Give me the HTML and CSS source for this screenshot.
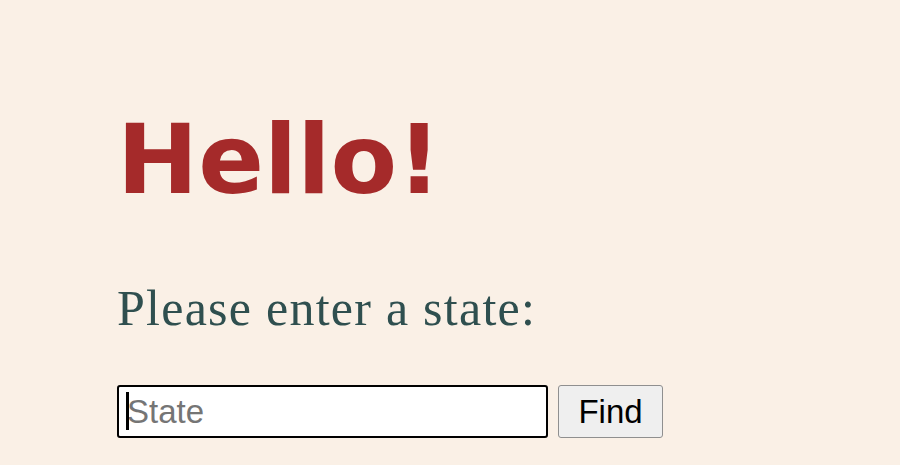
FILE: index.html
```html
<!DOCTYPE html>
<html lang="en">
<head>
<meta charset="utf-8">
<title>Hello</title>
<link rel="stylesheet" href="styles.css">
</head>
<body>
<main class="page">
  <h1 class="title">Hello!</h1>
  <p class="prompt">Please enter a state:</p>
  <form class="search" onsubmit="return false">
    <span class="input-wrap">
      <input class="state-input" type="text" placeholder="State" autofocus>
    </span>
    <button class="find-btn" type="submit">Find</button>
  </form>
</main>
</body>
</html>
```

FILE: styles.css
```css
html, body {
  margin: 0;
  padding: 0;
  background: #faf0e6;
}
.page {
  padding: 111px 0 0 117px;
}
.title {
  margin: 0;
  font-family: "DejaVu Sans", sans-serif;
  font-weight: bold;
  font-size: 97px;
  line-height: 1;
  color: #a52a2a;
}
.prompt {
  margin: 75px 0 0 0;
  font-family: "Liberation Serif", serif;
  font-size: 50px;
  letter-spacing: 1.25px;
  line-height: 1;
  color: #2f4f4f;
}
.search {
  display: flex;
  gap: 10px;
  margin-top: 52px;
}
.input-wrap {
  position: relative;
  display: block;
}
.input-wrap::after {
  content: "";
  position: absolute;
  left: 9px;
  top: 7px;
  width: 3px;
  height: 38px;
  background: #000;
}
.state-input {
  display: block;
  box-sizing: border-box;
  width: 431px;
  height: 53px;
  border: 2px solid #000;
  border-radius: 3px;
  padding: 0 8px;
  font-family: "Liberation Sans", Arial, sans-serif;
  font-size: 33px;
  background: #fff;
  color: #000;
  outline: none;
}
.state-input::placeholder {
  color: #757575;
}
.find-btn {
  box-sizing: border-box;
  width: 105px;
  height: 53px;
  border: 1px solid #8f8f8f;
  border-radius: 3px;
  background: #efefef;
  font-family: "Liberation Sans", Arial, sans-serif;
  font-size: 33px;
  color: #000;
  padding: 0;
}
```
